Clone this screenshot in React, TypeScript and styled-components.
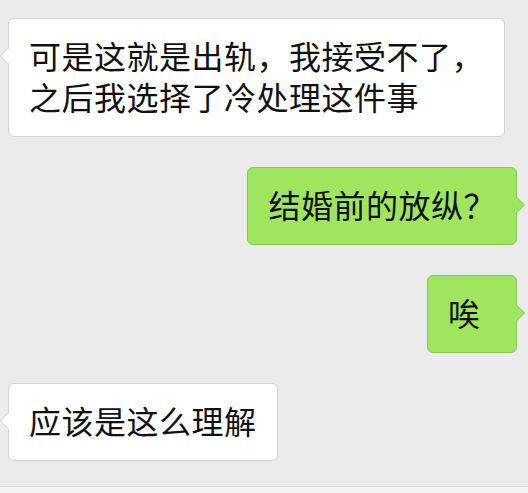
import React from 'react'
import styled, { createGlobalStyle, css } from 'styled-components'

const GlobalStyle = createGlobalStyle`
  html, body {
    margin: 0;
    padding: 0;
    background: #ebebeb;
  }
  body {
    font-family: "Noto Sans CJK SC", "Noto Sans", sans-serif;
  }
`

type Side = 'left' | 'right'

const messages: { side: Side; lines: string[] }[] = [
  { side: 'left', lines: ['可是这就是出轨，我接受不了，', '之后我选择了冷处理这件事'] },
  { side: 'right', lines: ['结婚前的放纵？'] },
  { side: 'right', lines: ['唉'] },
  { side: 'left', lines: ['应该是这么理解'] },
]

const App: React.FC = () => {
  return (
    <Page>
      <GlobalStyle />
      <ChatList>
        {messages.map((m, i) => (
          <Row key={i} side={m.side}>
            <Bubble side={m.side}>
              {m.lines.map((l, j) => (
                <Line key={j}>{l}</Line>
              ))}
            </Bubble>
          </Row>
        ))}
      </ChatList>
      <InputBar />
    </Page>
  )
}

const Page = styled.div`
  width: 528px;
  height: 493px;
  display: flex;
  flex-direction: column;
  background: #ebebeb;
  overflow: hidden;
`

const ChatList = styled.div`
  flex: 1;
  display: flex;
  flex-direction: column;
  gap: 30px;
  padding: 18px 11px 0 8px;
`

const Row = styled.div<{ side: Side }>`
  display: flex;
  justify-content: ${p => (p.side === 'left' ? 'flex-start' : 'flex-end')};
`

const tailLeft = css`
  &::before,
  &::after {
    content: '';
    position: absolute;
    top: 28px;
    width: 0;
    height: 0;
    border-style: solid;
    border-width: 9px 9px 9px 0;
    border-color: transparent;
  }
  &::before {
    left: -9px;
    border-right-color: #d2d2d2;
  }
  &::after {
    left: -8px;
    border-right-color: #ffffff;
  }
`

const tailRight = css`
  &::before,
  &::after {
    content: '';
    position: absolute;
    top: 28px;
    width: 0;
    height: 0;
    border-style: solid;
    border-width: 9px 0 9px 9px;
    border-color: transparent;
  }
  &::before {
    right: -9px;
    border-left-color: #86c656;
  }
  &::after {
    right: -8px;
    border-left-color: #9fe65e;
  }
`

const Bubble = styled.div<{ side: Side }>`
  position: relative;
  min-width: 48px;
  padding: 16px 20px 19px 20px;
  border-radius: 6px;
  font-size: 32px;
  letter-spacing: 0.5px;
  line-height: 41px;
  color: #111111;
  ${p =>
    p.side === 'left'
      ? css`
          background: #ffffff;
          border: 1px solid #d2d2d2;
          ${tailLeft}
        `
      : css`
          background: #9fe65e;
          border: 1px solid #86c656;
          ${tailRight}
        `}
`

const Line = styled.div`
  white-space: nowrap;
`

const InputBar = styled.div`
  height: 6px;
  border-top: 1px solid #d6d6d6;
  background: #f4f4f4;
`

export default App
